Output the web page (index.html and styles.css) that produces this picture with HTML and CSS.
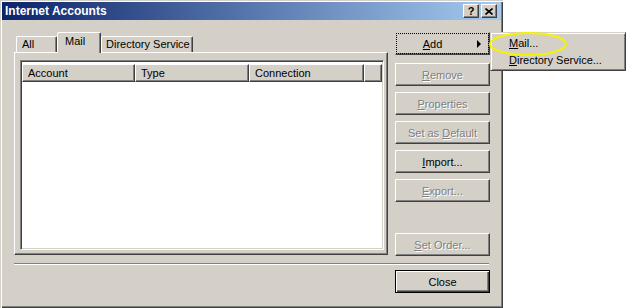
FILE: index.html
```html
<!DOCTYPE html>
<html lang="en">
<head>
  <meta charset="UTF-8" />
  <title>Internet Accounts</title>
  <link rel="stylesheet" href="styles.css">
</head>
<body>
  <div class="window">
    <div class="titlebar">
      <span class="title">Internet Accounts</span>
      <div class="caption-btns">
        <span class="cap-btn help">?</span>
        <span class="cap-btn">
          <svg width="8" height="7" viewBox="0 0 8 7"><path d="M0.5 0.5 L7.5 6.5 M7.5 0.5 L0.5 6.5" stroke="#000" stroke-width="1.6"/></svg>
        </span>
      </div>
    </div>

    <div class="main">
      <div class="tabs-area">
        <div class="tabs">
          <div class="tab tab-all">All</div>
          <div class="tab tab-mail selected">Mail</div>
          <div class="tab tab-dir">Directory Service</div>
        </div>
        <div class="panel">
          <div class="listview">
            <div class="lv-header">
              <div class="col col-account">Account</div>
              <div class="col col-type">Type</div>
              <div class="col col-conn">Connection</div>
              <div class="col col-rest"></div>
            </div>
          </div>
        </div>
      </div>

      <div class="side-buttons">
        <button class="btn pressed add"><span><u>A</u>dd</span><span class="arrow"></span></button>
        <button class="btn disabled"><u>R</u>emove</button>
        <button class="btn disabled"><u>P</u>roperties</button>
        <button class="btn disabled">Set as <u>D</u>efault</button>
        <button class="btn"><u>I</u>mport...</button>
        <button class="btn disabled"><u>E</u>xport...</button>
        <button class="btn disabled order"><u>S</u>et Order...</button>
      </div>
    </div>

    <div class="separator"></div>

    <div class="footer">
      <button class="btn default">Close</button>
    </div>

    <div class="popup-menu">
      <div class="menu-item"><u>M</u>ail...</div>
      <div class="menu-item"><u>D</u>irectory Service...</div>
    </div>

    <svg class="highlight" width="82" height="28" viewBox="0 0 82 28">
      <ellipse cx="40" cy="13" rx="38" ry="11" fill="none" stroke="#f4f400" stroke-width="2"/>
    </svg>
  </div>
</body>
</html>
```

FILE: styles.css
```css
body {
  margin: 0;
  background: #fff;
  font-family: 'Liberation Sans', Arial, sans-serif;
  font-size: 11px;
  color: #000;
}
.window {
  position: relative;
  width: 503px;
  height: 308px;
  box-sizing: border-box;
  padding: 2px;
  background: #d4d0c8;
  box-shadow: inset 1px 1px #d4d0c8, inset 2px 2px #fff, inset -1px -1px #404040, inset -2px -2px #808080;
}
.titlebar {
  display: flex;
  align-items: center;
  justify-content: space-between;
  height: 18px;
  padding: 0 4px 0 3px;
  background: linear-gradient(to right, #0a246a, #a6caf0);
}
.title {
  color: #fff;
  font-weight: bold;
  font-size: 12px;
}
.caption-btns {
  display: flex;
  gap: 2px;
}
.cap-btn {
  display: flex;
  align-items: center;
  justify-content: center;
  width: 16px;
  height: 14px;
  box-sizing: border-box;
  background: #d4d0c8;
  border: 1px solid;
  border-color: #fff #404040 #404040 #fff;
  box-shadow: inset -1px -1px #808080;
}
.cap-btn.help {
  font-weight: bold;
  font-size: 11px;
  line-height: 1;
}

.main {
  display: flex;
  gap: 7px;
  margin-top: 12px;
  padding: 0 11px 0 12px;
}
.tabs-area {
  width: 374px;
}
.tabs {
  display: flex;
  align-items: flex-end;
  height: 20px;
  padding-left: 2px;
  position: relative;
  z-index: 1;
}
.tab {
  box-sizing: border-box;
  height: 16px;
  line-height: 15px;
  border: 1px solid;
  border-bottom: none;
  border-color: #fff #404040 transparent #fff;
  border-radius: 2px 2px 0 0;
  box-shadow: inset -1px 0 #808080;
  white-space: nowrap;
}
.tab.selected {
  height: 21px;
  margin-bottom: -1px;
  line-height: 17px;
  background: #d4d0c8;
}
.tab-all { width: 41px; padding-left: 5px; }
.tab-mail { width: 44px; padding-left: 7px; }
.tab-dir { width: 92px; padding-left: 4px; }

.panel {
  box-sizing: border-box;
  height: 203px;
  padding: 7px 3px 4px 5px;
  border: 1px solid;
  border-color: #fff #404040 #404040 #fff;
  box-shadow: inset -1px -1px #808080;
}
.listview {
  box-sizing: border-box;
  height: 100%;
  background: #fff;
  border: 1px solid;
  border-color: #808080 #fff #fff #808080;
  box-shadow: inset 1px 1px #404040, inset -1px -1px #d4d0c8;
  padding: 1px;
}
.lv-header {
  display: flex;
  height: 18px;
  margin-top: 2px;
}
.col {
  box-sizing: border-box;
  height: 18px;
  line-height: 16px;
  padding-left: 5px;
  background: #d4d0c8;
  border: 1px solid;
  border-color: #fff #404040 #404040 #fff;
  box-shadow: inset -1px -1px #808080;
}
.col-account { width: 113px; }
.col-type { width: 114px; }
.col-conn { width: 115px; }
.col-rest { flex: 1; }

.side-buttons {
  display: flex;
  flex-direction: column;
  gap: 6px;
  width: 95px;
}
.btn {
  position: relative;
  box-sizing: border-box;
  width: 95px;
  height: 23px;
  padding: 0;
  font-family: inherit;
  font-size: 11px;
  color: #000;
  background: #d4d0c8;
  border: 1px solid;
  border-color: #fff #404040 #404040 #fff;
  box-shadow: inset -1px -1px #808080;
}
.btn.disabled {
  color: #808080;
  text-shadow: 1px 1px 0 #fff;
}
.btn.add {
  margin-bottom: 2px;
  padding-right: 20px;
}
.btn.pressed {
  border-color: #d4d0c8 #404040 #404040 #d4d0c8;
  box-shadow: inset -1px -1px #808080;
  outline: 1px dotted #000;
  outline-offset: -2px;
}
.arrow {
  position: absolute;
  right: 8px;
  top: 7px;
  border-left: 4px solid #000;
  border-top: 4px solid transparent;
  border-bottom: 4px solid transparent;
}
.btn.order {
  margin-top: 25px;
}
.btn.default {
  border: 1px solid #000;
  box-shadow: inset 1px 1px #fff, inset -1px -1px #404040, inset -2px -2px #808080;
}

.separator {
  margin: 7px 0 0 12px;
  width: 475px;
  border-top: 1px solid #808080;
  border-bottom: 1px solid #fff;
  height: 0;
}
.footer {
  display: flex;
  justify-content: flex-end;
  margin-top: 5px;
  padding-right: 11px;
}

.popup-menu {
  position: absolute;
  left: 490px;
  top: 32px;
  width: 136px;
  height: 39px;
  box-sizing: border-box;
  padding-top: 2px;
  background: #d4d0c8;
  border: 1px solid;
  border-color: #d4d0c8 #404040 #404040 #d4d0c8;
  box-shadow: inset 1px 1px #fff, inset -1px -1px #808080;
}
.menu-item {
  height: 17px;
  line-height: 17px;
  padding-left: 18px;
  white-space: nowrap;
}
.highlight {
  position: absolute;
  left: 488px;
  top: 31px;
}
```
